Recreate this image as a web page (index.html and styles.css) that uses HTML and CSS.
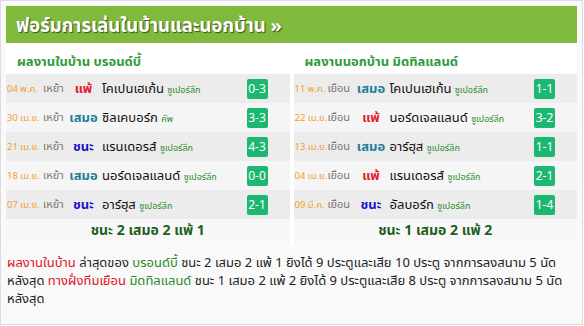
FILE: index.html
```html
<!DOCTYPE html>
<html lang="th">
<head>
<meta charset="utf-8">
<link rel="stylesheet" href="styles.css">
</head>
<body>
<div class="box">
  <div class="title">ฟอร์มการเล่นในบ้านและนอกบ้าน »</div>
  <div class="cols">
    <div class="col home">
      <div class="sub">ผลงานในบ้าน บรอนด์บี้</div>
      <div class="row odd"><span class="date">04 พ.ค.</span><span class="venue">เหย้า</span><span class="res lose">แพ้</span><span class="team">โคเปนเฮเก้น <small>ซูเปอร์ลีก</small></span><span class="score">0-3</span></div>
      <div class="row"><span class="date">30 เม.ย.</span><span class="venue">เหย้า</span><span class="res draw">เสมอ</span><span class="team">ซิลเคบอร์ก <small>คัพ</small></span><span class="score">3-3</span></div>
      <div class="row odd"><span class="date">21 เม.ย.</span><span class="venue">เหย้า</span><span class="res win">ชนะ</span><span class="team">แรนเดอรส์ <small>ซูเปอร์ลีก</small></span><span class="score">4-3</span></div>
      <div class="row"><span class="date">18 เม.ย.</span><span class="venue">เหย้า</span><span class="res draw">เสมอ</span><span class="team">นอร์ดเจลแลนด์ <small>ซูเปอร์ลีก</small></span><span class="score">0-0</span></div>
      <div class="row odd"><span class="date">07 เม.ย.</span><span class="venue">เหย้า</span><span class="res win">ชนะ</span><span class="team">อาร์ฮุส <small>ซูเปอร์ลีก</small></span><span class="score">2-1</span></div>
      <div class="sum">ชนะ 2 เสมอ 2 แพ้ 1</div>
    </div>
    <div class="col away">
      <div class="sub">ผลงานนอกบ้าน มิดทิลแลนด์</div>
      <div class="row odd"><span class="date">11 พ.ค.</span><span class="venue">เยือน</span><span class="res draw">เสมอ</span><span class="team">โคเปนเฮเก้น <small>ซูเปอร์ลีก</small></span><span class="score">1-1</span></div>
      <div class="row"><span class="date">22 เม.ย.</span><span class="venue">เยือน</span><span class="res lose">แพ้</span><span class="team">นอร์ดเจลแลนด์ <small>ซูเปอร์ลีก</small></span><span class="score">3-2</span></div>
      <div class="row odd"><span class="date">13 เม.ย.</span><span class="venue">เยือน</span><span class="res draw">เสมอ</span><span class="team">อาร์ฮุส <small>ซูเปอร์ลีก</small></span><span class="score">1-1</span></div>
      <div class="row"><span class="date">04 เม.ย.</span><span class="venue">เยือน</span><span class="res lose">แพ้</span><span class="team">แรนเดอรส์ <small>ซูเปอร์ลีก</small></span><span class="score">2-1</span></div>
      <div class="row odd"><span class="date">09 มี.ค.</span><span class="venue">เยือน</span><span class="res win">ชนะ</span><span class="team">อัลบอร์ก <small>ซูเปอร์ลีก</small></span><span class="score">1-4</span></div>
      <div class="sum">ชนะ 1 เสมอ 2 แพ้ 2</div>
    </div>
  </div>
  <p class="note"><span class="red">ผลงานในบ้าน</span> ล่าสุดของ <span class="green">บรอนด์บี้</span> ชนะ 2 เสมอ 2 แพ้ 1 ยิงได้ 9 ประตูและเสีย 10 ประตู จากการลงสนาม 5 นัดหลังสุด <span class="red">ทางฝั่งทีมเยือน</span> <span class="green">มิดทิลแลนด์</span> ชนะ 1 เสมอ 2 แพ้ 2 ยิงได้ 9 ประตูและเสีย 8 ประตู จากการลงสนาม 5 นัดหลังสุด</p>
</div>
</body>
</html>
```
FILE: styles.css
```css
html, body {
  margin: 0;
  padding: 0;
  background: #ffffff;
}
body {
  font-family: Tahoma, "Noto Sans Thai", "Noto Sans", sans-serif;
  color: #222;
}
.box {
  box-sizing: border-box;
  width: 583px;
  height: 325px;
  border: 1px solid #dcdcdc;
  background: #f9f9f9;
  padding: 5px;
}
.title {
  height: 37px;
  background: #80ba3c;
  color: #fff;
  font-size: 18.5px;
  font-weight: bold;
  line-height: 40px;
  padding-left: 10px;
  text-shadow: 1px 1px 1px rgba(0,0,0,0.55);
}
.cols {
  display: grid;
  grid-template-columns: 1fr 1fr;
  column-gap: 4px;
  background: #fff;
}
.sub {
  height: 27px;
  padding-top: 4px;
  line-height: 30px;
  padding-left: 11px;
  color: #2e9a3a;
  font-weight: bold;
  font-size: 13px;
  background: #fff;
}
.row {
  height: 29px;
  display: flex;
  align-items: center;
  background: #f5f5f5;
  padding-left: 1px;
}
.row.odd {
  background: #ececec;
}
.date {
  width: 36px;
  font-size: 9.5px;
  color: #f0a030;
  white-space: nowrap;
}
.away .date {
  width: 33px;
}
.venue {
  width: 25px;
  font-size: 11px;
  color: #777;
}
.away .venue {
  width: 28px;
}
.res {
  width: 31px;
  text-align: center;
  font-size: 13px;
  font-weight: bold;
}
.lose { color: #e4202a; }
.draw { color: #1f7f96; }
.win { color: #1a12c8; }
.team {
  flex: 1;
  font-size: 13px;
  color: #111;
  padding-left: 3px;
  white-space: nowrap;
}
.team small {
  font-size: 9px;
  color: #2a8a2a;
}
.score {
  width: 21px;
  height: 20px;
  line-height: 20px;
  background: #1cb872;
  color: #fff;
  font-size: 12px;
  text-align: center;
  border-radius: 2px;
  margin-right: 22px;
}
.sum {
  height: 27px;
  line-height: 23px;
  text-align: center;
  font-size: 14px;
  font-weight: bold;
  color: #1e5e1e;
  background: #f8f8f8;
}
.note {
  margin: 8px 0 0;
  padding: 0 1px;
  font-size: 13px;
  line-height: 18px;
  color: #222;
}
.red { color: #e0141e; }
.green { color: #2a8a2a; }
```
